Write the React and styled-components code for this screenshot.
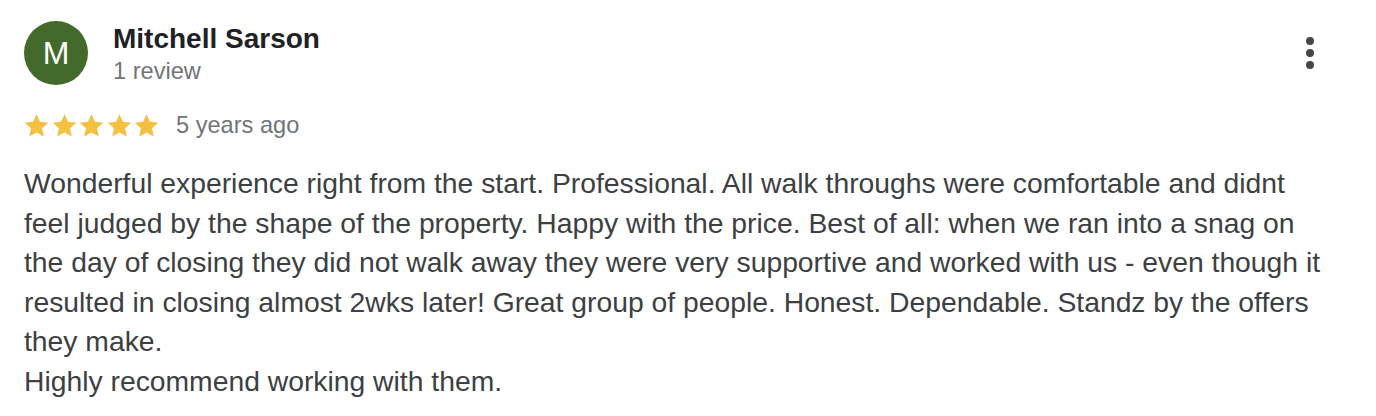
import React from 'react';
import styled, { createGlobalStyle } from 'styled-components';

const Global = createGlobalStyle`
  body {
    margin: 0;
    background: #fff;
    font-family: 'Liberation Sans', Arial, sans-serif;
  }
`;

const Review = styled.div`
  position: relative;
  padding: 21px 24px 0 24px;
  width: 1376px;
  box-sizing: border-box;
`;

const Header = styled.div`
  display: flex;
  align-items: flex-start;
  gap: 25px;
`;

const Avatar = styled.div`
  width: 64px;
  height: 64px;
  border-radius: 50%;
  background: ${(p) => p.color};
  color: #fff;
  display: flex;
  align-items: center;
  justify-content: center;
  font-size: 32px;
  flex-shrink: 0;
`;

const Who = styled.div`
  display: flex;
  flex-direction: column;
  padding-top: 2px;
`;

const Name = styled.div`
  font-size: 28px;
  font-weight: 700;
  color: #202124;
  line-height: 32px;
`;

const Sub = styled.div`
  font-size: 23.6px;
  color: #70757a;
  line-height: 32px;
`;

const Menu = styled.button`
  position: absolute;
  top: 37px;
  right: 62px;
  border: 0;
  background: none;
  padding: 0;
  display: flex;
  flex-direction: column;
  gap: 4px;
`;

const Dot = styled.span`
  width: 8px;
  height: 8px;
  border-radius: 50%;
  background: #444746;
`;

const Meta = styled.div`
  display: flex;
  align-items: center;
  gap: 17px;
  margin-top: 22px;
`;

const Stars = styled.div`
  display: flex;
  gap: 2.5px;
`;

const Body = styled.p`
  margin: 23px 0 0;
  width: 1306px;
  font-size: 28.3px;
  line-height: 39.6px;
  color: #3c4043;
  white-space: pre-line;
`;

const Star = () => (
  <svg width="25" height="25" viewBox="0 0 24 24">
    <path
      fill="#f4c042"
      d="M12 1.2l3.3 7.3 7.9.8-5.9 5.4 1.7 7.9L12 18.6l-7 4 1.7-7.9L.8 9.3l7.9-.8z"
    />
  </svg>
);

const text = `Wonderful experience right from the start. Professional. All walk throughs were comfortable and didnt feel judged by the shape of the property. Happy with the price. Best of all: when we ran into a snag on the day of closing they did not walk away they were very supportive and worked with us - even though it resulted in closing almost 2wks later! Great group of people. Honest. Dependable. Standz by the offers they make.
Highly recommend working with them.`;

const App = () => {
  return (
    <Review>
      <Global />
      <Header>
        <Avatar color="#436a2b">M</Avatar>
        <Who>
          <Name>Mitchell Sarson</Name>
          <Sub>1 review</Sub>
        </Who>
      </Header>
      <Menu aria-label="More">
        <Dot />
        <Dot />
        <Dot />
      </Menu>
      <Meta>
        <Stars>
          {[0, 1, 2, 3, 4].map((i) => (
            <Star key={i} />
          ))}
        </Stars>
        <Sub>5 years ago</Sub>
      </Meta>
      <Body>{text}</Body>
    </Review>
  );
};

export default App;
